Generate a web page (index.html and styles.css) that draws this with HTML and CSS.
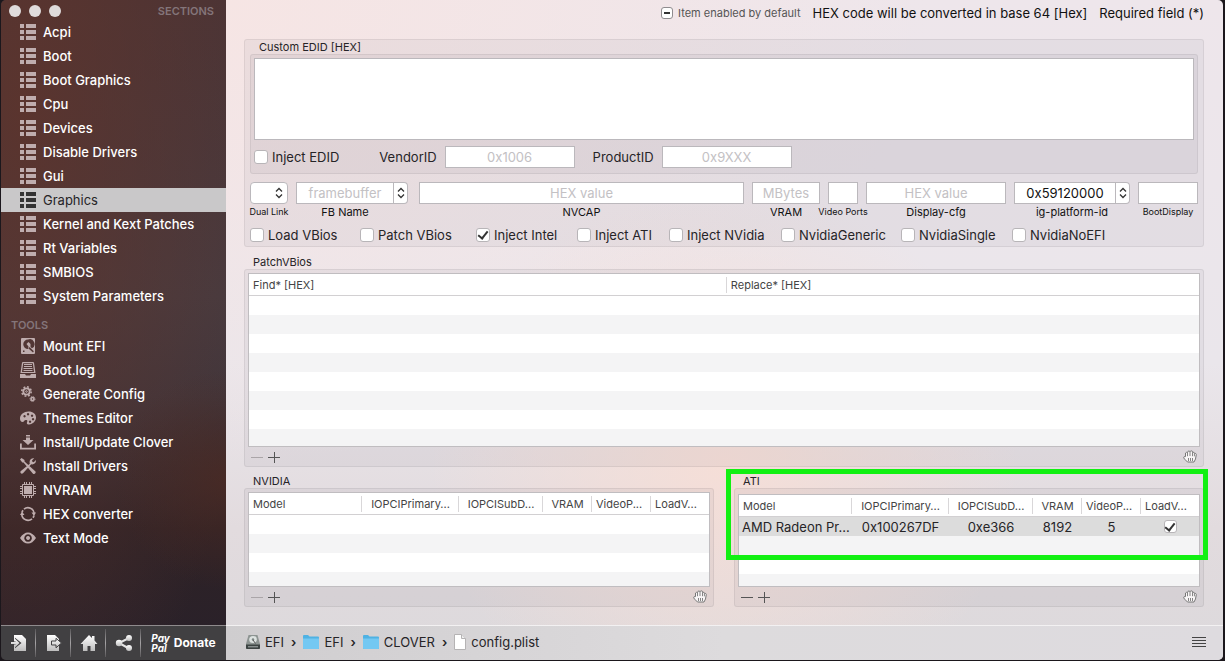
FILE: index.html
```html
<!DOCTYPE html>
<html lang="en">
<head>
    <meta charset="UTF-8">
    <meta name="viewport" content="width=device-width, initial-scale=1.0">
    <title>config.plist</title>
    <link rel="stylesheet" href="styles.css">
</head>
<body>

<!-- shared icons -->
<svg class="defs" width="0" height="0" aria-hidden="true">
    <symbol id="list" viewBox="0 0 16 16">
        <path d="M0 0h4v4H0zM6 0h10v4H6zM0 6h4v4H0zM6 6h10v4H6zM0 12h4v4H0zM6 12h10v4H6z"/>
    </symbol>
    <symbol id="updown" viewBox="0 0 8 12">
        <path d="M1 4.500l3-3 3 3M1 7.500l3 3 3-3" fill="none" stroke="#333" stroke-width="1.300"/>
    </symbol>
    <symbol id="minus" viewBox="0 0 12 12"><path d="M0 6.500h12" stroke="currentColor"/></symbol>
    <symbol id="plus" viewBox="0 0 12 12"><path d="M0 6.500h12M6.500 1v11" stroke="currentColor"/></symbol>
    <symbol id="hand" viewBox="0 0 14 13">
        <path d="M2.500 6.500V3q.8-1.200 2-.3.200-1.700 1.300-1.700 1 0 1.200.7.300-.9 1.300-.9 1.200 0 1.300 1.500 1.600-.5 1.900 1 1.500-.3 1.800 1.200L12.500 9l-1.500 3H4.500L2 9.500.6 7.800q.2-1.600 1.900-1.300z" fill="#f8f5f6" stroke="#777"/>
        <path d="M4.500 2.700v3.500M7 1.700v4.300M9.500 2.300v3.900M11.400 3.300v3M5.500 8v3M7.500 8v3M9.500 8v3" fill="none" stroke="#777" stroke-width=".9"/>
    </symbol>
    <symbol id="folder" viewBox="0 0 16 14">
        <path d="M0 1q0-1 1-1h4l1.500 1.500H15q1 0 1 1V13q0 1-1 1H1q-1 0-1-1z" fill="#4fb2e3"/>
        <path d="M0 3.500h16V13q0 1-1 1H1q-1 0-1-1z" fill="#74c8f2"/>
    </symbol>
    <linearGradient id="silver" x2="0" y2="1">
        <stop offset="0" stop-color="#fff"/>
        <stop offset="1" stop-color="#bdbdbd"/>
    </linearGradient>
</svg>

<div class="window">
    <aside class="sidebar">
        <div class="titlebar">
            <div class="lights"><button aria-label="Close"></button><button aria-label="Minimize"></button><button aria-label="Zoom"></button></div>
            <h2>SECTIONS</h2>
        </div>
        <nav>
            <a href="#"><svg><use href="#list"/></svg>Acpi</a>
            <a href="#"><svg><use href="#list"/></svg>Boot</a>
            <a href="#"><svg><use href="#list"/></svg>Boot Graphics</a>
            <a href="#"><svg><use href="#list"/></svg>Cpu</a>
            <a href="#"><svg><use href="#list"/></svg>Devices</a>
            <a href="#"><svg><use href="#list"/></svg>Disable Drivers</a>
            <a href="#"><svg><use href="#list"/></svg>Gui</a>
            <a href="#" class="active"><svg><use href="#list"/></svg>Graphics</a>
            <a href="#"><svg><use href="#list"/></svg>Kernel and Kext Patches</a>
            <a href="#"><svg><use href="#list"/></svg>Rt Variables</a>
            <a href="#"><svg><use href="#list"/></svg>SMBIOS</a>
            <a href="#"><svg><use href="#list"/></svg>System Parameters</a>
        </nav>
        <h2 class="tools-title">TOOLS</h2>
        <nav>
            <a href="#"><svg viewBox="0 0 16 16"><path fill-rule="evenodd" d="M2 0h12q1 0 1 1v14q0 1-1 1H2q-1 0-1-1V1q0-1 1-1zM8 1.500a4.800 4.800 0 1 0 .1 9.600l.4-2.600-2-2.500 2-2 2 2v3l1.500 1.200A4.800 4.800 0 0 0 8 1.500zM9.500 9l-1 1.500 4.500 4 .8-1.200zM3 12.500v1.500h1.500v-1.500z"/></svg>Mount EFI</a>
            <a href="#"><svg viewBox="0 0 16 16"><path fill-rule="evenodd" d="M3 0h10q.8 0 1 .8L15.500 11H.5L2 .8Q2.200 0 3 0zM3.200 1.200L2 10h12l-1.200-8.800z"/><path d="M4 2.500h8M4 4.500h8M3.500 6.500h9M3.500 8.500h9" stroke="currentColor"/><path d="M0 12h5l1 1.500h4l1-1.500h5v4H0z"/></svg>Boot.log</a>
            <a href="#"><svg viewBox="0 0 16 16" fill="none" stroke="currentColor"><circle cx="6.500" cy="5.500" r="3.200" stroke-width="1.800"/><circle cx="6.500" cy="5.500" r="4.700" stroke-width="1.600" stroke-dasharray="1.850 1.840"/><circle cx="6.500" cy="5.500" r=".8"/><circle cx="12.500" cy="13" r="1.500" stroke-width="1.600"/><circle cx="12.500" cy="13" r="2.500" stroke-dasharray="1 .96"/></svg>Generate Config</a>
            <a href="#"><svg viewBox="0 0 16 16"><path fill-rule="evenodd" d="M8.500 1.500C13 1.500 16 4 16 7.500s-3 6.500-7 7c-2 .2-2.500-1-2-2.200s.5-2-.5-2.200C4 9.500 4.500 12 2.500 12 1 12 0 10.500 0 8.500c0-4 4-7 8.500-7zM8 3a1.200 1.200 0 1 0 .1 0zM12 4.500a1.200 1.200 0 1 0 .1 0zM4.500 5a1.200 1.200 0 1 0 .1 0zM13 8a1.200 1.200 0 1 0 .1 0zM10 10.500a1.200 1.200 0 1 0 .1 0z"/></svg>Themes Editor</a>
            <a href="#"><svg viewBox="0 0 16 16"><path d="M6 1h4v1.500H6zM6 3.500h4V6h3.500L8 11 2.500 6H6zM0 9.500h1.800v4.200h12.400V9.500H16v6H0z"/></svg>Install/Update Clover</a>
            <a href="#"><svg viewBox="0 0 16 16"><path d="M0 1.500L1.500 0l3 2v1.500L15.500 13.500q.5 1-.5 2t-2 .3L3.500 4.500H2.300zM9.800 5.700Q9 2.500 11 1q1.500-1.200 3.200-.7L12 2.500l.4 1.200 1.300.5L15.900 2q.3 2-1 3.300-1.600 1.500-3.700 1L3 15.200q-1.200.9-2.300-.1-.8-1.200.2-2.200z"/></svg>Install Drivers</a>
            <a href="#"><svg viewBox="0 0 16 16"><path fill="none" stroke="currentColor" d="M2.500 2.500h11v11h-11z"/><path d="M4 4h8v8H4z"/><path fill="none" stroke="currentColor" d="M4.500 0v3M6.500 0v3M9.500 0v3M11.500 0v3M4.500 13v3M6.500 13v3M9.500 13v3M11.500 13v3M0 4.500h3M0 6.500h3M0 9.500h3M0 11.500h3M13 4.500h3M13 6.500h3M13 9.500h3M13 11.500h3"/></svg>NVRAM</a>
            <a href="#"><svg viewBox="0 0 16 16"><path fill="none" stroke="currentColor" stroke-width="1.700" d="M4 3.200A6.200 6.200 0 0 1 14.200 7.500M12 12.800A6.200 6.200 0 0 1 1.800 8.500M2 6.500A6.200 6.200 0 0 1 3 4.300M14 9.500A6.200 6.200 0 0 1 13 11.700"/><path d="M11.500 6.500H16l-2 3.500zM0 9l2-3.500L4.500 9z"/></svg>HEX converter</a>
            <a href="#"><svg viewBox="0 0 16 16"><path fill-rule="evenodd" d="M0 8q3.500-5.500 8-5.500T16 8q-3.500 5.500-8 5.500T0 8zM8 4.200a3.800 3.800 0 1 0 .1 0zM8 6a2 2 0 1 0 .1 0z"/></svg>Text Mode</a>
        </nav>
        <div class="toolbar">
            <button aria-label="Import"><svg viewBox="0 0 18 18"><path d="M4 1h8l4 4v12H4z"/><path d="M1 7.500h4V3.800L11.500 9 5 14.200v-3.700H1z" fill="#414042"/><path d="M1 8h4.800L3.800 6 5 4.700 9.500 9 5 13.300 3.800 12l2-2H1z"/></svg></button>
            <button aria-label="Export"><svg viewBox="0 0 18 18"><path d="M2 1h8l4 4v12H2z"/><path d="M6.500 7h4.500V4.300L16.500 9 11 13.800V11H6.500z" stroke="#414042"/></svg></button>
            <button aria-label="Home"><svg viewBox="0 0 18 18"><path d="M9 1l3 3V2h2.500v4.500L17.500 10H15v7h-4.500v-5h-3v5H3v-7H.5z"/></svg></button>
            <button aria-label="Share"><svg viewBox="0 0 18 18"><path d="M14 4L4 9l10 5.500" fill="none" stroke="currentColor" stroke-width="2"/><circle cx="14" cy="4" r="3"/><circle cx="4" cy="9" r="3.200"/><circle cx="14" cy="14" r="3"/></svg></button>
            <button class="donate"><i>Pay<br>Pal</i><b>Donate</b></button>
        </div>
    </aside>

    <main>
        <div class="content">
            <div class="hints">
                <label class="small"><input type="checkbox" class="mixed">Item enabled by default</label>
                <span>HEX code will be converted in base 64 [Hex]</span>
                <span>Required field (*)</span>
            </div>

            <section class="box settings">
                <label class="caption edid-caption" for="edid">Custom EDID [HEX]</label>
                <div class="box edid">
                    <textarea id="edid"></textarea>
                    <div class="edid-row">
                        <label class="check"><input type="checkbox">Inject EDID</label>
                        <label for="vendor">VendorID</label>
                        <input type="text" id="vendor" placeholder="0x1006">
                        <label for="product">ProductID</label>
                        <input type="text" id="product" placeholder="0x9XXX">
                    </div>
                </div>

                <div class="fields">
                    <div class="field dual">
                        <div class="popup"><select id="dual"><option></option><option>Yes</option><option>No</option></select><svg><use href="#updown"/></svg></div>
                        <label class="tiny" for="dual">Dual Link</label>
                    </div>
                    <div class="field fb">
                        <div class="combo"><input type="text" id="fb" placeholder="framebuffer"><button aria-label="Show names"><svg><use href="#updown"/></svg></button></div>
                        <label for="fb">FB Name</label>
                    </div>
                    <div class="field nvcap">
                        <input type="text" id="nvcap" placeholder="HEX value">
                        <label for="nvcap">NVCAP</label>
                    </div>
                    <div class="field vram">
                        <input type="text" id="vram" placeholder="MBytes">
                        <label for="vram">VRAM</label>
                    </div>
                    <div class="field ports">
                        <input type="text" id="ports">
                        <label class="tiny" for="ports">Video Ports</label>
                    </div>
                    <div class="field display">
                        <input type="text" id="display" placeholder="HEX value">
                        <label for="display">Display-cfg</label>
                    </div>
                    <div class="field platform">
                        <div class="combo"><input type="text" id="platform" value="0x59120000"><button aria-label="Show ids"><svg><use href="#updown"/></svg></button></div>
                        <label for="platform">ig-platform-id</label>
                    </div>
                    <div class="field bootdisplay">
                        <input type="text" id="bootdisplay">
                        <label class="tiny" for="bootdisplay">BootDisplay</label>
                    </div>
                </div>

                <div class="checks">
                    <label class="check"><input type="checkbox">Load VBios</label>
                    <label class="check"><input type="checkbox">Patch VBios</label>
                    <label class="check"><input type="checkbox" checked>Inject Intel</label>
                    <label class="check"><input type="checkbox">Inject ATI</label>
                    <label class="check"><input type="checkbox">Inject NVidia</label>
                    <label class="check"><input type="checkbox">NvidiaGeneric</label>
                    <label class="check"><input type="checkbox">NvidiaSingle</label>
                    <label class="check"><input type="checkbox">NvidiaNoEFI</label>
                </div>
            </section>

            <section class="group patch">
                <h3 class="caption">PatchVBios</h3>
                <div class="box">
                    <div class="list">
                        <table>
                            <colgroup><col class="find"><col></colgroup>
                            <thead><tr><th>Find* [HEX]</th><th>Replace* [HEX]</th></tr></thead>
                        </table>
                    </div>
                    <div class="actions">
                        <button class="off" aria-label="Remove"><svg><use href="#minus"/></svg></button>
                        <button aria-label="Add"><svg><use href="#plus"/></svg></button>
                        <button class="grab" aria-label="Reorder"><svg><use href="#hand"/></svg></button>
                    </div>
                </div>
            </section>

            <div class="cards">
                <section class="group">
                    <h3 class="caption">NVIDIA</h3>
                    <div class="box">
                        <div class="list">
                            <table class="devices">
                                <colgroup><col class="model"><col class="primary"><col class="sub"><col class="mem"><col class="video"><col class="load"></colgroup>
                                <thead><tr><th>Model</th><th>IOPCIPrimary...</th><th>IOPCISubD...</th><th>VRAM</th><th>VideoP...</th><th>LoadV...</th></tr></thead>
                            </table>
                        </div>
                        <div class="actions">
                            <button class="off" aria-label="Remove"><svg><use href="#minus"/></svg></button>
                            <button aria-label="Add"><svg><use href="#plus"/></svg></button>
                            <button class="grab" aria-label="Reorder"><svg><use href="#hand"/></svg></button>
                        </div>
                    </div>
                </section>
                <section class="group marked">
                    <h3 class="caption">ATI</h3>
                    <div class="box">
                        <div class="list">
                            <table class="devices">
                                <colgroup><col class="model"><col class="primary"><col class="sub"><col class="mem"><col class="video"><col class="load"></colgroup>
                                <thead><tr><th>Model</th><th>IOPCIPrimary...</th><th>IOPCISubD...</th><th>VRAM</th><th>VideoP...</th><th>LoadV...</th></tr></thead>
                                <tbody>
                                    <tr><td>AMD Radeon Pr...</td><td>0x100267DF</td><td>0xe366</td><td>8192</td><td>5</td><td><input type="checkbox" aria-label="LoadVBios" checked></td></tr>
                                </tbody>
                            </table>
                        </div>
                        <div class="actions">
                            <button aria-label="Remove"><svg><use href="#minus"/></svg></button>
                            <button aria-label="Add"><svg><use href="#plus"/></svg></button>
                            <button class="grab" aria-label="Reorder"><svg><use href="#hand"/></svg></button>
                        </div>
                    </div>
                    <div class="highlight"></div>
                </section>
            </div>
        </div>

        <footer>
            <a href="#"><svg class="disk" viewBox="0 0 14 16"><path d="M2.500 1h9L14 10v4q0 1-1 1H1q-1 0-1-1v-4z" fill="#8d9492"/><path d="M0 10.500h14V14q0 1-1 1H1q-1 0-1-1z" fill="#3d4443"/><ellipse cx="7" cy="5.500" rx="3.800" ry="3.500" fill="#dce2e0"/><circle cx="7" cy="5.500" r="1.200" fill="#7c8583"/><path d="M7 6l2.500 3.500" stroke="#555"/><path d="M2 12.800h10" stroke="#a9b0ae"/></svg>EFI</a>
            <span>›</span>
            <a href="#"><svg class="folder"><use href="#folder"/></svg>EFI</a>
            <span>›</span>
            <a href="#"><svg class="folder"><use href="#folder"/></svg>CLOVER</a>
            <span>›</span>
            <a href="#"><svg class="file" viewBox="0 0 12 16"><path d="M.5.5h7l4 4v11H.5z" fill="#fff" stroke="#b5b3b4"/><path d="M7.500.5v4h4" fill="#eee" stroke="#b5b3b4"/></svg>config.plist</a>
            <button aria-label="Menu"><svg viewBox="0 0 14 11"><path d="M0 .5h14M0 3.500h14M0 6.500h14M0 9.500h14" stroke="#444"/></svg></button>
        </footer>
    </main>
</div>

</body>
</html>
```
FILE: styles.css
```css
* {
    box-sizing: border-box;
}
body {
    margin: 0;
    background-color: #1b171c;
    font-family: Inter, "Liberation Sans", sans-serif;
    font-size: 13px;
    line-height: 16px;
    color: #262427;
}
button {
    padding: 0;
    border: none;
    background: none;
    color: inherit;
    font: inherit;
    display: flex;
    align-items: center;
    justify-content: center;
}
a {
    color: inherit;
    text-decoration: none;
}
h2, h3 {
    margin: 0;
    font-size: 11px;
    font-weight: 400;
}
.defs {
    position: absolute;
}
.window {
    display: flex;
    min-height: calc(100vh - 1px);
    margin: 0 2px 1px 1px;
    border-radius: 5px;
    overflow: hidden;
}

/* sidebar */
.sidebar {
    width: 225px;
    flex: none;
    display: flex;
    flex-direction: column;
    color: #fff;
    background:
        radial-gradient(circle at 225px 480px, rgba(78, 42, 34, 0.7), rgba(78, 42, 34, 0) 110px),
        radial-gradient(ellipse at 20px 110px, rgba(92, 52, 45, 0.9), rgba(92, 52, 45, 0) 250px),
        linear-gradient(#4a3436, #473b40 45%, #40363c 60%, #2e2226 80%, #29212a);
}
.titlebar {
    display: flex;
    justify-content: space-between;
    align-items: center;
    height: 20px;
    padding: 2px 12px 0 8px;
}
.lights {
    display: flex;
    gap: 8px;
}
.lights button {
    width: 12px;
    height: 12px;
    border-radius: 50%;
    background-color: #dfdbdb;
}
.sidebar h2 {
    font-weight: 600;
    color: #84757a;
}
.sidebar .tools-title {
    padding: 9px 10px 1px;
}
.sidebar nav a {
    display: flex;
    align-items: center;
    gap: 7px;
    height: 24px;
    padding-left: 19px;
    font-weight: 500;
}
.sidebar nav svg {
    width: 16px;
    height: 16px;
    color: #bfadae;
    fill: currentColor;
}
.sidebar nav svg[fill="none"] {
    fill: none;
}
.sidebar nav a.active {
    background-color: #c9c8c9;
    color: #262427;
    font-weight: 400;
}
.sidebar nav a.active svg {
    color: #333;
}
.toolbar {
    display: flex;
    height: 35px;
    margin-top: auto;
    border-top: 1px solid #8f8b8d;
    background-color: #414042;
}
.toolbar button {
    width: 35px;
    background: linear-gradient(#5a585a, #a5a3a5, #5a585a) right center / 1px 28px no-repeat;
}
.toolbar svg {
    width: 18px;
    height: 18px;
    color: #e4e4e4;
    fill: url(#silver);
}
.toolbar .donate {
    flex: 1;
    gap: 4px;
    background: none;
    font-size: 12px;
}
.donate i {
    font-size: 10px;
    line-height: 10px;
    font-weight: 700;
    text-align: left;
}

/* main area */
main {
    flex: 1;
    min-width: 0;
    display: flex;
    flex-direction: column;
    background:
        radial-gradient(ellipse at 50% 70%, rgba(247, 222, 214, 0.9), rgba(247, 222, 214, 0) 42%),
        radial-gradient(ellipse at 0% 0%, #f6e5e4, rgba(246, 229, 228, 0) 50%),
        linear-gradient(#eee6eb, #eae6eb 55%, #e2dbde 80%, #dcd9dc);
}
.content {
    flex: 1;
    display: flex;
    flex-direction: column;
    padding: 0 19px 18px 18px;
}
.hints {
    display: flex;
    justify-content: flex-end;
    align-items: center;
    gap: 12px;
    height: 39px;
    padding-bottom: 13px;
    color: #111;
}
.small {
    display: flex;
    align-items: center;
    gap: 5px;
    font-size: 11px;
    color: #555;
}
.box {
    border: 1px solid rgba(0, 0, 0, 0.06);
    border-radius: 3px;
    background-color: rgba(60, 50, 70, 0.05);
}
.caption {
    font-size: 11px;
    line-height: 14px;
}

/* form controls */
input[type="text"], textarea {
    min-width: 0;
    width: 100%;
    height: 22px;
    margin: 0;
    padding: 0;
    border: 1px solid #bbb8bc;
    border-radius: 0;
    background-color: #fff;
    color: #111;
    font: inherit;
    text-align: center;
}
input::placeholder {
    color: #c3c1c4;
}
input[type="checkbox"] {
    appearance: none;
    flex: none;
    width: 14px;
    height: 14px;
    margin: 0;
    border: 1px solid #b8b5b8;
    border-radius: 3px;
    background-color: #fff;
    display: grid;
    place-items: center;
}
input[type="checkbox"]:checked::before {
    content: "";
    width: 4px;
    height: 8px;
    margin-bottom: 2px;
    border: solid #333;
    border-width: 0 2px 2px 0;
    transform: rotate(38deg);
}
input[type="checkbox"].mixed {
    width: 12px;
    height: 12px;
    border-color: #8f8c8f;
}
input.mixed::before {
    content: "";
    width: 6px;
    height: 2px;
    background-color: #333;
}
.check {
    display: flex;
    align-items: center;
    gap: 4px;
    white-space: nowrap;
}

/* settings */
.settings {
    padding: 0 5px 3px;
}
.edid-caption {
    display: block;
    padding-left: 9px;
}
.edid {
    padding: 3px;
}
.edid textarea {
    display: block;
    height: 82px;
    resize: none;
    text-align: left;
}
.edid-row {
    display: flex;
    align-items: center;
    padding: 6px 0 2px;
}
.edid-row .check {
    margin-right: 40px;
}
.edid-row input[type="text"] {
    width: 130px;
    margin: 0 18px 0 8px;
}
.fields {
    display: flex;
    gap: 8px;
    padding-top: 8px;
}
.field {
    display: flex;
    flex-direction: column;
    align-items: center;
}
.field label {
    font-size: 11px;
    white-space: nowrap;
    color: #111;
}
.field .tiny {
    font-size: 9px;
}
.dual { width: 38px; }
.fb { width: 112px; }
.nvcap { flex: 1; margin-left: 3px; }
.vram { width: 68px; }
.ports { width: 30px; }
.display { width: 140px; }
.platform { width: 116px; }
.bootdisplay { width: 60px; }
.fb label {
    padding-right: 14px;
}
.popup {
    position: relative;
    width: 100%;
}
.popup select {
    appearance: none;
    display: block;
    width: 100%;
    height: 22px;
    border: 1px solid #bbb8bc;
    border-radius: 4px;
    background-color: #fff;
}
.popup svg, .combo svg {
    width: 8px;
    height: 12px;
}
.popup svg {
    position: absolute;
    right: 5px;
    top: 5px;
    pointer-events: none;
}
.combo {
    display: flex;
    width: 100%;
}
.combo button {
    flex: none;
    width: 14px;
    border: 1px solid #bbb8bc;
    border-left: none;
    border-radius: 0 4px 4px 0;
    background-color: #fff;
}
.checks {
    display: grid;
    grid-template-columns: 110px 116px 101px 92px 112px 120px 111px 1fr;
    padding-top: 7px;
}

/* lists */
.group {
    display: flex;
    flex-direction: column;
}
.group .caption {
    padding-left: 9px;
}
.group .box {
    flex: 1;
    display: flex;
    flex-direction: column;
    padding: 3px 3px 0;
}
.patch {
    flex: 1;
    padding-top: 8px;
}
.list {
    flex: 1;
    min-height: 95px;
    border: 1px solid #c0bdc0;
    background: linear-gradient(#fff 50%, #f4f4f5 50%) 0 22px / 100% 38px;
}
table {
    width: 100%;
    table-layout: fixed;
    border-collapse: separate;
    border-spacing: 0;
}
th {
    height: 22px;
    padding: 0 4px;
    border-bottom: 1px solid #d2d0d2;
    background: linear-gradient(#d9d7d9, #d9d7d9) right center / 1px 16px no-repeat #fff;
    font-size: 11px;
    font-weight: 400;
    text-align: left;
    white-space: nowrap;
    color: #444;
}
th:last-child {
    background: #fff;
}
td {
    height: 19px;
    padding: 0;
    background-color: #dcdcdc;
    text-align: center;
    white-space: nowrap;
}
td:first-child {
    padding-left: 3px;
    text-align: left;
}
td input[type="checkbox"] {
    width: 13px;
    height: 13px;
    margin: 0 auto;
}
.devices th {
    padding: 0;
    text-align: center;
}
.devices th:first-child, .devices th:nth-child(n+5) {
    padding-left: 4px;
    text-align: left;
}
.find { width: 50.3%; }
.primary { width: 97px; }
.sub { width: 84px; }
.mem { width: 49px; }
.video { width: 59px; }
.load { width: 58px; }
.actions {
    display: flex;
    align-items: center;
    gap: 5px;
    height: 19px;
    padding: 0 3px;
    color: #555;
}
.actions svg {
    width: 12px;
    height: 12px;
}
.actions .off {
    color: #aaa5a8;
}
.actions .grab {
    margin-left: auto;
}
.actions .grab svg {
    width: 14px;
    height: 13px;
}
.cards {
    display: grid;
    grid-template-columns: 1fr 1fr;
    gap: 20px;
    padding-top: 7px;
}
.marked {
    position: relative;
}
.marked .box {
    padding-top: 5px;
}
.marked .list {
    min-height: 93px;
}
.highlight {
    position: absolute;
    top: -5px;
    left: -8px;
    right: -4px;
    height: 91px;
    border: 5px solid #12f012;
    pointer-events: none;
}

/* path bar */
footer {
    display: flex;
    align-items: center;
    gap: 7px;
    height: 35px;
    padding: 0 17px 2px 20px;
    border-top: 1px solid #f3f1f2;
    background: linear-gradient(90deg, #cfcdcf, #dddbdd 50%, #dedbdf);
}
footer a {
    display: flex;
    align-items: center;
    gap: 5px;
}
footer span {
    font-weight: 600;
}
footer button {
    margin-left: auto;
}
footer button svg {
    width: 14px;
    height: 11px;
}
.disk {
    width: 14px;
    height: 16px;
}
.folder {
    width: 16px;
    height: 14px;
}
.file {
    width: 12px;
    height: 16px;
}
```
